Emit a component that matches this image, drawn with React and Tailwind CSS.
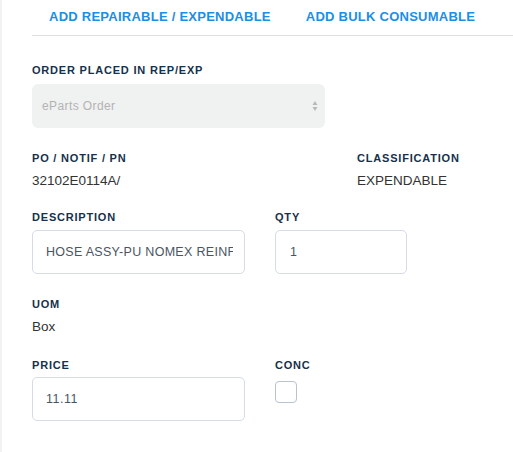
const Label = ({ children }) => (
  <div className="text-[11px] font-bold tracking-[0.8px] text-[#16314b] leading-[14px]">{children}</div>
);

const Value = ({ children }) => (
  <div className="mt-[8px] text-[13.5px] text-[#333] leading-[16px]">{children}</div>
);

const App = () => {
  return (
    <div className="h-[452px] w-[513px] bg-white font-['Liberation_Sans',Arial,sans-serif] overflow-hidden">
      <div className="h-full border-l-2 border-[#f2f2f2] pl-[30px]">
        {/* Tabs */}
        <div className="flex border-b border-[#dedede] h-[36px] pt-[9px]">
          <span className="ml-[17px] text-[13px] font-bold tracking-[0.25px] text-[#1b8ee6] leading-[16px]">
            ADD REPAIRABLE / EXPENDABLE
          </span>
          <span className="ml-[35px] text-[13px] font-bold tracking-[0.25px] text-[#1b8ee6] leading-[16px]">
            ADD BULK CONSUMABLE
          </span>
        </div>

        {/* Order placed */}
        <div className="mt-[27px]">
          <Label>ORDER PLACED IN REP/EXP</Label>
          <div className="mt-[7px] w-[293px] h-[44px] rounded-[6px] bg-[#f0f1f1] flex items-center justify-between pl-[10px] pr-[7px]">
            <span className="text-[12px] tracking-[0.4px] text-[#b3b3b3]">eParts Order</span>
            <svg width="6" height="12" viewBox="0 0 6 12">
              <path d="M3 1 L5.5 5 H0.5 Z" fill="#b8b8b8" />
              <path d="M3 11 L5.5 7 H0.5 Z" fill="#b8b8b8" />
            </svg>
          </div>
        </div>

        {/* PO / Classification */}
        <div className="mt-[23px] flex">
          <div className="w-[325px]">
            <Label>PO / NOTIF / PN</Label>
            <Value>32102E0114A/</Value>
          </div>
          <div>
            <Label>CLASSIFICATION</Label>
            <Value>EXPENDABLE</Value>
          </div>
        </div>

        {/* Description / Qty */}
        <div className="mt-[21px] flex">
          <div className="w-[243px]">
            <Label>DESCRIPTION</Label>
            <div className="mt-[6px] w-[213px] h-[44px] rounded-[5px] border border-[#d5dce5] flex items-center pl-[13px] pr-[11px]">
              <div className="overflow-hidden whitespace-nowrap text-[12.5px] tracking-[0.3px] text-[#4a5563]">
                HOSE ASSY-PU NOMEX REINF
              </div>
            </div>
          </div>
          <div>
            <Label>QTY</Label>
            <div className="mt-[6px] w-[132px] h-[44px] rounded-[5px] border border-[#d5dce5] flex items-center pl-[14px]">
              <span className="text-[12.5px] text-[#4a5563]">1</span>
            </div>
          </div>
        </div>

        {/* UOM */}
        <div className="mt-[23px]">
          <Label>UOM</Label>
          <Value>Box</Value>
        </div>

        {/* Price / Conc */}
        <div className="mt-[23px] flex">
          <div className="w-[243px]">
            <Label>PRICE</Label>
            <div className="mt-[5px] w-[213px] h-[44px] rounded-[5px] border border-[#d5dce5] flex items-center pl-[13px]">
              <span className="text-[12.5px] tracking-[0.5px] text-[#4a5563]">11.11</span>
            </div>
          </div>
          <div>
            <Label>CONC</Label>
            <div className="mt-[9px] w-[22px] h-[22px] rounded-[4px] border border-[#b7c3d2] bg-white" />
          </div>
        </div>
      </div>
    </div>
  );
};

export default App;
